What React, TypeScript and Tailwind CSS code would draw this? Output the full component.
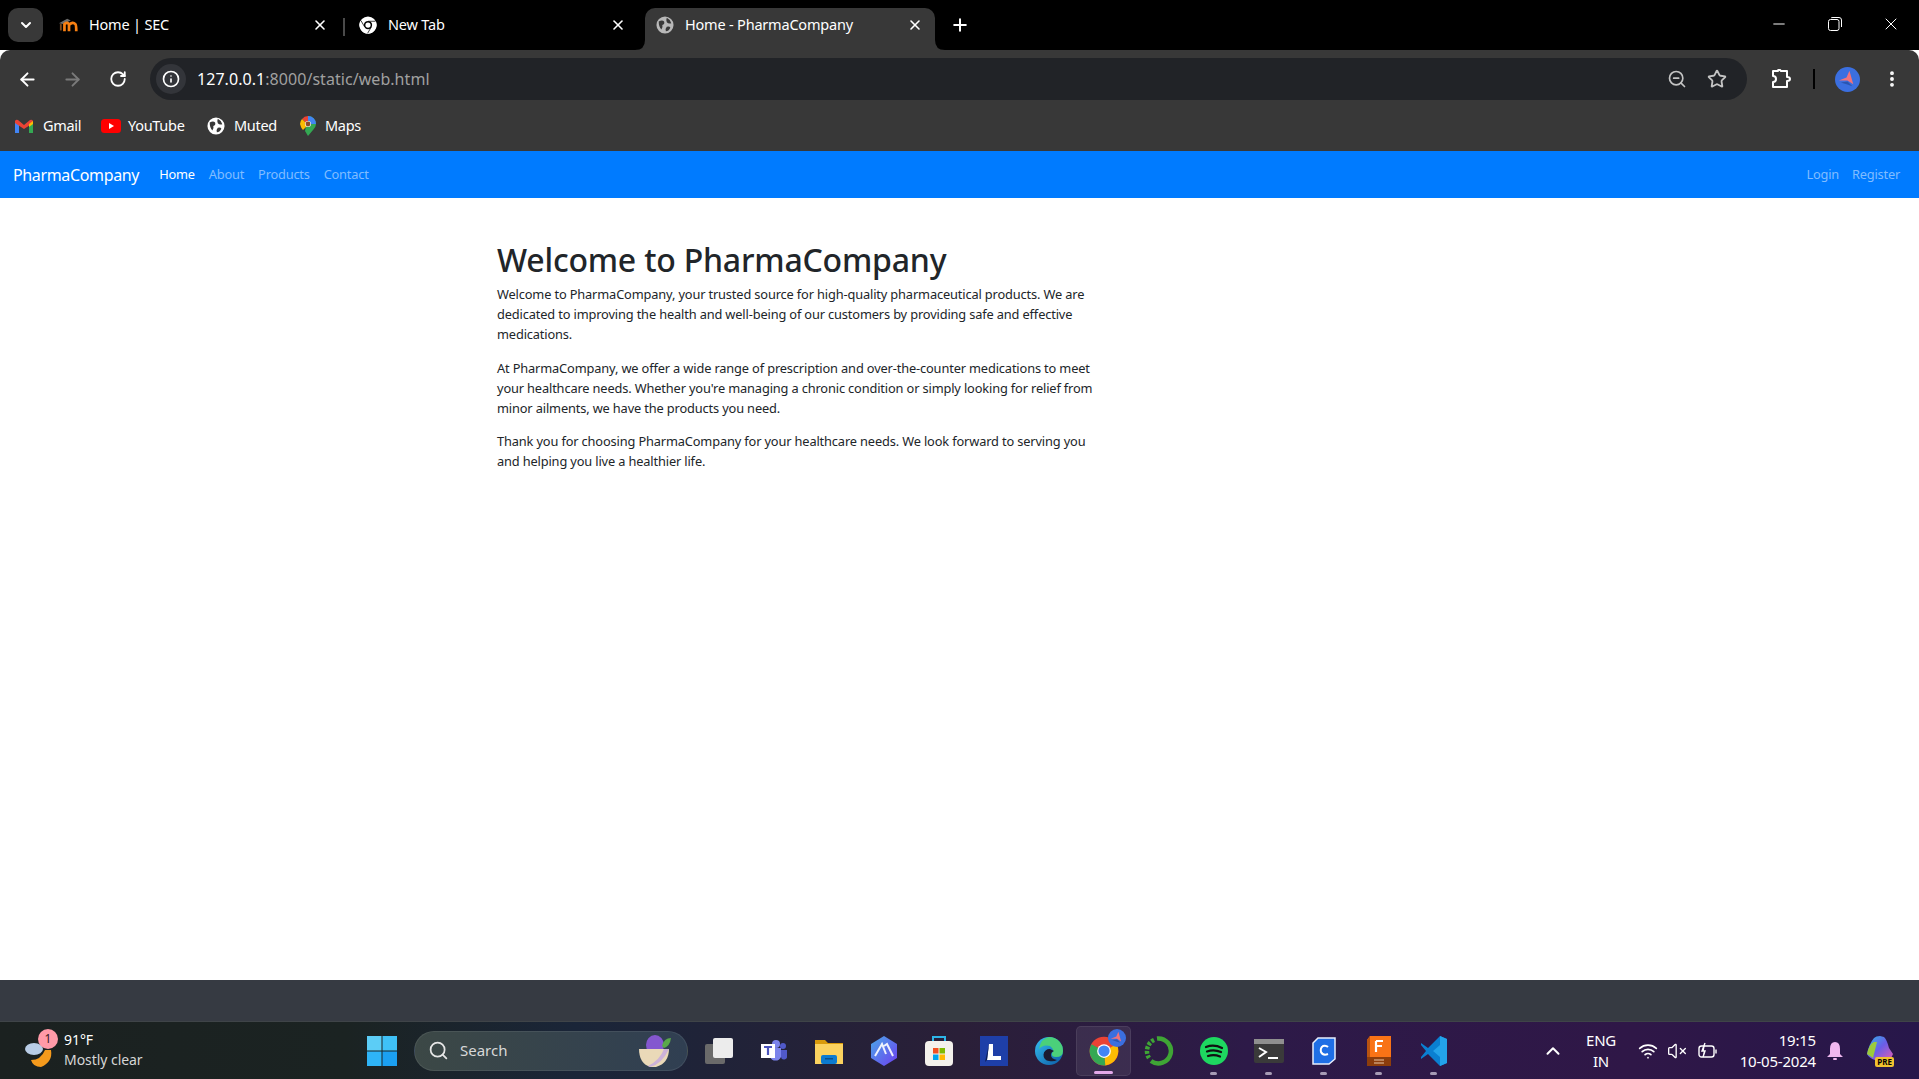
import {
  ArrowLeft,
  ArrowRight,
  ChevronDown,
  ChevronUp,
  Info,
  Minus,
  MoreVertical,
  Plus,
  RotateCw,
  Search,
  Star,
  VolumeX,
  Wifi,
  X,
  ZoomOut,
} from "lucide-react";

const SANS = "font-['Noto_Sans','Open_Sans',sans-serif]";

const ChromeMark = ({ size = 18, mono = false }: { size?: number; mono?: boolean }) => (
  <svg width={size} height={size} viewBox="0 0 48 48">
    <circle cx="24" cy="24" r="23" fill={mono ? "#fff" : "#ea4335"} />
    <path d="M24 24 L44 13 A23 23 0 0 1 26 47 Z" fill={mono ? "#fff" : "#fbbc04"} />
    <path d="M24 24 L26 47 A23 23 0 0 1 4 13 Z" fill={mono ? "#fff" : "#34a853"} />
    {mono && <path d="M24 14 L44 14 M33 29 L23 46 M15 29 L5 12" stroke="#000" strokeWidth="2" />}
    <circle cx="24" cy="24" r="11" fill={mono ? "#000" : "#fff"} />
    <circle cx="24" cy="24" r={mono ? 7 : 9} fill={mono ? "#fff" : "#4285f4"} />
  </svg>
);

const GlobeMark = ({ size = 18, color = "#fff", bg = "#383838" }: { size?: number; color?: string; bg?: string }) => (
  <svg width={size} height={size} viewBox="0 0 20 20">
    <circle cx="10" cy="10" r="9.5" fill={color} />
    <path d="M3 6 Q7 4 9 6 Q10 9 7 10 Q8 13 6 15 Q3 12 3 6Z" fill={bg} />
    <path d="M12 2 Q16 4 17 8 Q14 9 12 7 Q11 4 12 2Z M12 12 Q15 11 16 13 Q14 17 11 17 Q10 14 12 12Z" fill={bg} />
  </svg>
);

const MoodleMark = () => (
  <svg width="22" height="16" viewBox="0 0 22 16">
    <path d="M0 6 L9 1 L13 3 L4 7Z" fill="#6b6b6b" />
    <path d="M2 7 V14" stroke="#7a4a20" strokeWidth="2" />
    <path d="M6 15 V7 Q10 4 11 8 V15 M11 8 Q15 4 18 7 Q19 8 19 15" fill="none" stroke="#f98012" strokeWidth="3" />
  </svg>
);

const Tab = ({
  icon,
  title,
  width,
  pad,
  closeGap = "mr-[12px]",
  active,
}: {
  icon: React.ReactNode;
  title: string;
  width: string;
  pad: string;
  closeGap?: string;
  active?: boolean;
}) => (
  <div
    className={`relative flex h-[42px] items-center pb-[8px] ${width} ${pad} ${
      active ? "rounded-t-[10px] bg-[#383838]" : ""
    }`}
  >
    {active && (
      <>
        <svg width="10" height="10" viewBox="0 0 10 10" className="absolute bottom-0 -left-[10px]">
          <path d="M10 0 V10 H0 Q10 10 10 0Z" fill="#383838" />
        </svg>
        <svg width="10" height="10" viewBox="0 0 10 10" className="absolute -right-[10px] bottom-0">
          <path d="M0 0 V10 H10 Q0 10 0 0Z" fill="#383838" />
        </svg>
      </>
    )}
    <span className="flex w-[20px] shrink-0 items-center justify-center">{icon}</span>
    <span className="ml-[10px] flex-1 text-[14.5px] tracking-[-0.2px] text-white">{title}</span>
    <X size={16} strokeWidth={2.4} className={`${closeGap} text-white`} />
  </div>
);

const GmailMark = () => (
  <svg width="18" height="14" viewBox="0 0 18 14">
    <path d="M0 2 V14 H4 V5Z" fill="#4285f4" />
    <path d="M18 2 V14 H14 V5Z" fill="#34a853" />
    <path d="M0 2 Q1 0 3 1 L9 6 L15 1 Q17 0 18 2 L18 4 L9 10 L0 4Z" fill="#ea4335" />
    <path d="M14 5 L18 2 V5 L14 8Z" fill="#fbbc04" />
  </svg>
);

const YouTubeMark = () => (
  <svg width="20" height="14" viewBox="0 0 20 14">
    <rect width="20" height="14" rx="3.5" fill="#f00" />
    <path d="M8 4 L13 7 L8 10Z" fill="#fff" />
  </svg>
);

const MapsMark = () => (
  <svg width="16" height="20" viewBox="0 0 16 20">
    <path d="M8 0 A8 8 0 0 1 16 8 Q16 11 13 14 L8 20 L5 15Z" fill="#34a853" />
    <path d="M8 0 A8 8 0 0 1 16 8 L10 8 A2 2 0 0 0 8 5Z" fill="#4285f4" />
    <path d="M8 0 A8 8 0 0 0 2 3 L6 7 Q7 5 8 5Z" fill="#ea4335" />
    <path d="M2 3 A8 8 0 0 0 0 8 Q1 12 3 14 L7 10 L6 7Z" fill="#fbbc04" />
    <circle cx="8" cy="8" r="3" fill="#fff" opacity="0.9" />
    <circle cx="8" cy="8" r="2.4" fill="#8a4b2a" />
  </svg>
);

const Bookmark = ({ icon, label, className }: { icon: React.ReactNode; label: string; className: string }) => (
  <div className={`flex items-center ${className}`}>
    {icon}
    <span className="text-[14.5px] tracking-[-0.3px] text-white">{label}</span>
  </div>
);

const Avatar = ({ size }: { size: number }) => (
  <svg width={size} height={size} viewBox="0 0 26 26">
    <circle cx="13" cy="13" r="13" fill="#3b6fe0" />
    <path d="M15 4 L19 18 L13 14 L4 14 L12 11Z" fill="#f2727a" />
    <path d="M6 16 L13 15 L18 20 L12 18Z" fill="#2a55b0" />
  </svg>
);

// taskbar drawings
const FolderIcon = () => (
  <svg width="28" height="26" viewBox="0 0 28 26">
    <path d="M0 2 H10 L13 5 H28 V25 H0Z" fill="#d99a0b" />
    <path d="M0 6 H28 V26 H0Z" fill="#fbd25f" />
    <rect x="6" y="17" width="16" height="9" rx="2" fill="#0c7bd1" />
    <rect x="10" y="20" width="8" height="1.5" fill="#0a4f8a" />
  </svg>
);

const TeamsIcon = () => (
  <svg width="26" height="24" viewBox="0 0 26 24">
    <circle cx="15" cy="5" r="4" fill="#7b83eb" />
    <circle cx="22" cy="7" r="3" fill="#5059c9" />
    <path d="M9 9 H20 V18 A6 6 0 0 1 9 18Z" fill="#7b83eb" />
    <path d="M20 11 H26 V17 A3 3 0 0 1 20 18Z" fill="#5059c9" />
    <rect x="0" y="5" width="14" height="14" fill="#fff" />
    <path d="M3 8 H11 M7 8 V16" stroke="#4b53bc" strokeWidth="2.2" />
  </svg>
);

const ArcIcon = () => (
  <svg width="26" height="30" viewBox="0 0 26 30">
    <defs>
      <linearGradient id="arcg" x1="0" y1="0" x2="1" y2="1">
        <stop offset="0" stopColor="#4aa8e8" />
        <stop offset="1" stopColor="#6d3ff0" />
      </linearGradient>
    </defs>
    <path d="M13 0 L26 8 V22 L13 30 L0 22 V8Z" fill="url(#arcg)" />
    <path d="M4 20 L11 8 L15 18 M13 10 L16 8 L22 20" fill="none" stroke="#fff" strokeWidth="2" opacity="0.9" />
  </svg>
);

const StoreIcon = () => (
  <svg width="28" height="30" viewBox="0 0 28 30">
    <path d="M8 6 V1 H20 V6" fill="none" stroke="#2db5e8" strokeWidth="2" />
    <rect y="5" width="28" height="25" rx="4" fill="#f4f1ec" />
    <rect x="8" y="12" width="5.5" height="5.5" fill="#f25022" />
    <rect x="14.5" y="12" width="5.5" height="5.5" fill="#7fba00" />
    <rect x="8" y="18.5" width="5.5" height="5.5" fill="#00a4ef" />
    <rect x="14.5" y="18.5" width="5.5" height="5.5" fill="#ffb900" />
  </svg>
);

const LIcon = () => (
  <svg width="28" height="30" viewBox="0 0 28 30">
    <rect width="28" height="30" fill="#1e3fa8" />
    <path d="M9 8 H13 V20 H21 V24 H7Z" fill="#fff" />
    <path d="M9 8 L7 24 L5 26 Z" fill="#0d1f55" />
  </svg>
);

const EdgeIcon = () => (
  <svg width="28" height="30" viewBox="0 0 28 28">
    <defs>
      <linearGradient id="edgeg" x1="0" y1="0" x2="1" y2="1">
        <stop offset="0" stopColor="#35c1f1" />
        <stop offset="1" stopColor="#0c59a4" />
      </linearGradient>
    </defs>
    <circle cx="14" cy="14" r="14" fill="url(#edgeg)" />
    <path d="M14 0 A14 14 0 0 1 28 14 Q28 20 21 20 Q16 20 17 16 Q20 13 15 9 Q8 7 4 12 Q6 1 14 0Z" fill="#4bd07a" />
    <path d="M15 12 A6 6 0 0 0 14 24 Q19 25 22 23 Q16 22 16 18 Q16 15 19 14Z" fill="#1b1b30" />
  </svg>
);

const RingIcon = () => (
  <svg width="30" height="30" viewBox="0 0 30 30">
    <path d="M13 2.5 A12.5 12.5 0 1 1 7 25" fill="none" stroke="#3fa535" strokeWidth="4.5" />
    <path d="M5 22 A12.5 12.5 0 0 1 11 3.5" fill="none" stroke="#3fa535" strokeWidth="4.5" strokeDasharray="3 1.5" />
  </svg>
);

const SpotifyIcon = () => (
  <svg width="28" height="28" viewBox="0 0 28 28">
    <circle cx="14" cy="14" r="14" fill="#1ed760" />
    <path d="M6 10 Q14 7 22 11 M7 14.5 Q14 12 21 15 M8 19 Q14 17 20 19.5" fill="none" stroke="#111" strokeWidth="2.2" strokeLinecap="round" />
  </svg>
);

const TerminalIcon = () => (
  <svg width="30" height="24" viewBox="0 0 30 24">
    <rect width="30" height="24" rx="2" fill="#3a3a3a" />
    <rect width="30" height="5" fill="#8f8f8f" />
    <path d="M5 9 L12 13 L5 18" fill="none" stroke="#fff" strokeWidth="2" />
    <path d="M14 19 H24" stroke="#fff" strokeWidth="2" />
  </svg>
);

const CIcon = () => (
  <svg width="24" height="28" viewBox="0 0 24 28">
    <path d="M6 1 H23 V22 L17 27 H1 V6Z" fill="#1f6fe5" stroke="#e8eefb" strokeWidth="1.5" />
    <path d="M16 10 Q14 8 11 9 Q8 11 9 15 Q11 19 16 17" fill="none" stroke="#fff" strokeWidth="2" />
  </svg>
);

const FusionIcon = () => (
  <svg width="24" height="30" viewBox="0 0 24 30">
    <path d="M3 0 H24 V21 H0 V4Z" fill="#f97316" />
    <path d="M0 4 V21 L3 22 V0Z" fill="#b85310" />
    <rect y="21" width="24" height="9" fill="#8c3d0c" />
    <path d="M9 5 H16 M9 5 V16 M9 10 H15" stroke="#fff" strokeWidth="2.2" fill="none" />
    <path d="M7 24 H17 M7 27 H17" stroke="#e9c9a6" strokeWidth="1" />
  </svg>
);

const VsCodeIcon = () => (
  <svg width="26" height="30" viewBox="0 0 26 30">
    <path d="M19 0 L26 3 V27 L19 30 L7 18 L0 23 V21 L5 15 L0 9 V7 L7 12Z" fill="#0a7fd1" />
    <path d="M19 0 L26 3 V27 L19 30 V21 L12 15 L19 9Z" fill="#23a3ea" />
  </svg>
);

const CopilotIcon = () => (
  <div className="relative flex h-[30px] w-[28px] items-start justify-center">
    <svg width="26" height="24" viewBox="0 0 26 24">
      <defs>
        <linearGradient id="copg" x1="0" y1="0" x2="1" y2="1">
          <stop offset="0" stopColor="#2fb5e8" />
          <stop offset="0.5" stopColor="#6a5de8" />
          <stop offset="1" stopColor="#e05fb0" />
        </linearGradient>
      </defs>
      <path d="M7 2 Q9 0 13 0 L17 1 Q20 4 22 12 L26 18 Q24 24 18 24 H8 Q2 22 0 18 Q2 8 7 2Z" fill="url(#copg)" />
      <path d="M0 18 Q2 8 7 6 L10 6 L6 22Z" fill="#9ccb3b" />
    </svg>
    <span className="absolute -bottom-[1px] right-0 rounded-[2px] bg-[#f2c230] px-[2px] text-[8px] leading-[10px] font-bold text-black">
      PRE
    </span>
  </div>
);

const BowlIcon = () => (
  <svg width="38" height="34" viewBox="0 0 38 34">
    <ellipse cx="19" cy="11" rx="9" ry="10" fill="#8457cf" />
    <path d="M26 12 Q28 4 35 4 Q34 12 28 14Z" fill="#5aa84a" />
    <path d="M3 15 H33 Q33 29 20 33 H14 Q3 29 3 15Z" fill="#ead9b8" />
    <path d="M14 33 Q26 30 33 15 H28 Q24 26 12 32Z" fill="#c4a8e0" opacity="0.8" />
  </svg>
);

const TaskIcon = ({
  children,
  mark,
  active,
}: {
  children: React.ReactNode;
  mark?: boolean;
  active?: boolean;
}) => (
  <div
    className={`relative flex h-[50px] w-[55px] shrink-0 items-center justify-center ${
      active ? "rounded-[5px] border border-[#ffffff14] bg-[#ffffff14]" : ""
    }`}
  >
    {children}
    {mark && (
      <span
        className={`absolute bottom-[1px] h-[3px] rounded-full ${active ? "w-[19px] bg-[#e3a8ea]" : "w-[7px] bg-[#a79bb5]"}`}
      />
    )}
  </div>
);

export default function App() {
  return (
    <div className={`flex h-[1079px] w-[1919px] flex-col overflow-hidden bg-white ${SANS}`}>
      {/* tab strip */}
      <div className="flex h-[50px] shrink-0 items-end bg-black">
        <div className="mb-[8px] ml-[8px] flex h-[34px] w-[35px] items-center justify-center rounded-[10px] bg-[#383838]">
          <ChevronDown size={16} strokeWidth={3} className="text-white" />
        </div>
        <div className="ml-[7px] flex items-end">
          <Tab icon={<MoodleMark />} title="Home | SEC" width="w-[293px]" pad="pl-[9px]" closeGap="mr-[15px]" />
          <div className="mb-[14px] h-[18px] w-[2px] bg-[#4a4a4a]" />
          <Tab icon={<ChromeMark mono />} title="New Tab" width="w-[300px]" pad="pl-[13px]" closeGap="mr-[19px]" />
          <Tab
            active
            icon={<GlobeMark color="#b8b8b8" />}
            title="Home - PharmaCompany"
            width="w-[290px]"
            pad="pl-[10px]"
          />
        </div>
        <div className="mb-[8px] ml-[12px] flex h-[34px] w-[26px] items-center justify-center">
          <Plus size={20} strokeWidth={2.4} className="text-white" />
        </div>
        <div className="ml-auto flex h-[50px] items-start pt-[7px] text-white">
          <div className="flex h-[34px] w-[56px] items-center justify-center">
            <Minus size={18} strokeWidth={1.3} />
          </div>
          <div className="flex h-[34px] w-[56px] items-center justify-center">
            <svg width="14" height="14" viewBox="0 0 14 14" fill="none" stroke="#fff" strokeWidth="1">
              <rect x="0.5" y="2.5" width="10.5" height="11" rx="2" />
              <path d="M3 1 Q3 0.5 5 0.5 H11 Q13.5 0.5 13.5 3 V10" />
            </svg>
          </div>
          <div className="flex h-[34px] w-[56px] items-center justify-center">
            <X size={20} strokeWidth={1.2} />
          </div>
        </div>
      </div>

      {/* toolbar */}
      <div className="flex h-[50px] shrink-0 items-center rounded-t-[10px] bg-[#383838] pt-[8px] pl-[5px]">
        <div className="flex w-[45px] justify-center text-white">
          <ArrowLeft size={21} strokeWidth={2.2} />
        </div>
        <div className="flex w-[45px] justify-center text-[#7a7a7a]">
          <ArrowRight size={21} strokeWidth={2.2} />
        </div>
        <div className="flex w-[45px] justify-center text-white">
          <RotateCw size={18} strokeWidth={2.4} />
        </div>
        <div className="ml-[10px] flex h-[42px] flex-1 items-center rounded-full bg-[#212327] pl-[6px]">
          <div className="flex h-[30px] w-[30px] items-center justify-center rounded-full bg-[#33353a]">
            <Info size={18} strokeWidth={2.2} className="text-white" />
          </div>
          <div className="ml-[11px] flex-1 text-[16px] tracking-[0.05px] text-[#a0a0a0]">
            <span className="text-white">127.0.0.1</span>:8000/static/web.html
          </div>
          <ZoomOut size={20} strokeWidth={2} className="text-[#c4c4c4]" />
          <Star size={20} strokeWidth={2.2} className="mr-[20px] ml-[20px] text-[#c4c4c4]" />
        </div>
        <div className="flex w-[172px] items-center text-white">
          <svg width="20" height="20" viewBox="0 0 20 20" className="ml-[24px]" fill="none" stroke="#fff" strokeWidth="2">
            <path d="M2 2 H7 Q7 0 9 1 Q10 2 10 2 H16 V8 Q19 8 19 10 Q19 12 16 12 V18 H2 V13 Q5 13 5 10 Q5 7 2 7Z" strokeLinejoin="round" />
          </svg>
          <div className="ml-[22px] h-[20px] w-[2px] bg-black" />
          <div className="ml-[20px]">
            <Avatar size={25} />
          </div>
          <MoreVertical size={20} strokeWidth={2.6} className="ml-[22px]" />
        </div>
      </div>

      {/* bookmarks */}
      <div className="flex h-[51px] shrink-0 items-center bg-[#383838] pl-[15px]">
        <Bookmark icon={<GmailMark />} label="Gmail" className="w-[86px] gap-[10px]" />
        <Bookmark icon={<YouTubeMark />} label="YouTube" className="w-[106px] gap-[7px]" />
        <Bookmark icon={<GlobeMark />} label="Muted" className="w-[93px] gap-[9px]" />
        <Bookmark icon={<MapsMark />} label="Maps" className="gap-[9px]" />
      </div>

      {/* site navbar */}
      <nav className="flex h-[47px] shrink-0 items-center bg-[#007bff] pr-[19px] pl-[13px] text-[12.8px] text-[#80bdff]">
        <span className="mr-[20px] text-[16px] tracking-[-0.35px] text-white">PharmaCompany</span>
        <div className="flex gap-[14px] tracking-[-0.2px]">
          <span className="text-white">Home</span>
          <span>About</span>
          <span>Products</span>
          <span>Contact</span>
        </div>
        <div className="ml-auto flex gap-[13px] tracking-[-0.2px]">
          <span>Login</span>
          <span>Register</span>
        </div>
      </nav>

      {/* page */}
      <main className="flex-1 bg-white pt-[43px] pl-[497px] text-[#212529]">
        <div className="w-[600px]">
          <h1 className="mb-[5px] text-[32px] leading-[38px] font-medium tracking-[-0.2px]">Welcome to PharmaCompany</h1>
          <div className="text-[12.8px] leading-[20px] tracking-[-0.14px]">
            <p className="mb-[13.5px]">
              Welcome to PharmaCompany, your trusted source for high-quality pharmaceutical products. We are dedicated
              to improving the health and well-being of our customers by providing safe and effective medications.
            </p>
            <p className="mb-[13.5px]">
              At PharmaCompany, we offer a wide range of prescription and over-the-counter medications to meet your
              healthcare needs. Whether you're managing a chronic condition or simply looking for relief from minor
              ailments, we have the products you need.
            </p>
            <p>
              Thank you for choosing PharmaCompany for your healthcare needs. We look forward to serving you and helping
              you live a healthier life.
            </p>
          </div>
        </div>
      </main>

      {/* strip under the page */}
      <div className="h-[41px] shrink-0 bg-[#363a42]" />

      {/* taskbar */}
      <footer className="flex h-[58px] shrink-0 items-center border-t border-[#3f4448] bg-[linear-gradient(90deg,#1b2120_0%,#1b2322_18%,#1a2538_30%,#2a1f38_50%,#2d1a48_65%,#2f1747_85%,#27174a_100%)] text-white">
        <div className="flex w-[367px] shrink-0 items-center pl-[25px]">
          <div className="relative h-[34px] w-[30px]">
            <svg width="30" height="34" viewBox="0 0 30 34">
              <path d="M6 26 Q16 26 20 16 L26 16 Q28 28 16 33 Q8 33 6 26Z" fill="#f59a1c" />
              <ellipse cx="9" cy="15" rx="9" ry="6" fill="#b9cde6" />
            </svg>
            <span className="absolute -top-[5px] left-[13px] flex h-[20px] w-[20px] items-center justify-center rounded-full bg-[#ff9aa8] text-[12px] text-[#3a1a20]">
              1
            </span>
          </div>
          <div className="mb-[2px] ml-[9px] text-[14px] leading-[20px] tracking-[-0.05px]">
            <div>91°F</div>
            <div className="text-[#d6d6d6]">Mostly clear</div>
          </div>
        </div>
        <svg width="30" height="30" viewBox="0 0 30 30" className="shrink-0">
          <rect width="14.5" height="14.5" fill="#5ccdf6" />
          <rect x="15.5" width="14.5" height="14.5" fill="#3fc1f7" />
          <rect y="15.5" width="14.5" height="14.5" fill="#2eb4f7" />
          <rect x="15.5" y="15.5" width="14.5" height="14.5" fill="#1ba0f2" />
        </svg>
        <div className="ml-[17px] flex h-[40px] w-[274px] shrink-0 items-center rounded-full border border-[#ffffff14] bg-[linear-gradient(90deg,#3c4846,#303f52)] pr-[13px] pl-[13px]">
          <Search size={21} strokeWidth={2} className="text-[#e6e6e6]" />
          <span className="ml-[11px] flex-1 text-[15px] text-[#d8d8d8]">Search</span>
          <BowlIcon />
        </div>
        <div className="ml-[3px] flex shrink-0 items-center">
          <TaskIcon>
            <div className="relative h-[26px] w-[28px]">
              <div className="absolute bottom-0 left-0 h-[20px] w-[20px] rounded-[2px] bg-[#6a6a6a]" />
              <div className="absolute top-0 right-0 h-[20px] w-[20px] rounded-[2px] bg-[#ececec]" />
            </div>
          </TaskIcon>
          <TaskIcon>
            <TeamsIcon />
          </TaskIcon>
          <TaskIcon>
            <FolderIcon />
          </TaskIcon>
          <TaskIcon>
            <ArcIcon />
          </TaskIcon>
          <TaskIcon>
            <StoreIcon />
          </TaskIcon>
          <TaskIcon>
            <LIcon />
          </TaskIcon>
          <TaskIcon>
            <EdgeIcon />
          </TaskIcon>
          <TaskIcon active mark>
            <div className="relative">
              <ChromeMark size={30} />
              <span className="absolute -top-[7px] -right-[7px]">
                <Avatar size={18} />
              </span>
            </div>
          </TaskIcon>
          <TaskIcon>
            <RingIcon />
          </TaskIcon>
          <TaskIcon mark>
            <SpotifyIcon />
          </TaskIcon>
          <TaskIcon mark>
            <TerminalIcon />
          </TaskIcon>
          <TaskIcon mark>
            <CIcon />
          </TaskIcon>
          <TaskIcon mark>
            <FusionIcon />
          </TaskIcon>
          <TaskIcon mark>
            <VsCodeIcon />
          </TaskIcon>
        </div>
        <ChevronUp size={22} strokeWidth={2.2} className="ml-[81px] shrink-0" />
        <div className="ml-[17px] w-[40px] shrink-0 text-center text-[15px] leading-[21px] tracking-[-0.3px]">
          ENG
          <br />
          IN
        </div>
        <Wifi size={20} strokeWidth={2} className="ml-[17px] shrink-0" />
        <VolumeX size={20} strokeWidth={1.6} className="ml-[9px] shrink-0" />
        <svg width="20" height="20" viewBox="0 0 20 20" className="ml-[11px] shrink-0" fill="none" stroke="#fff" strokeWidth="1.4">
          <rect x="1" y="5" width="15" height="11" rx="2.5" />
          <path d="M18 8.5 V12.5" />
          <path d="M7 2 L4 10 H7 L5 16" fill="#fff" />
        </svg>
        <div className="ml-[14px] w-[84px] shrink-0 whitespace-nowrap text-right text-[15px] leading-[21px] tracking-[-0.2px]">
          19:15
          <br />
          10-05-2024
        </div>
        <svg width="16" height="20" viewBox="0 0 16 20" className="ml-[11px] shrink-0">
          <path d="M8 1 Q13 1 13 8 V13 L16 16 H0 L3 13 V8 Q3 1 8 1Z" fill="#f0b8f0" />
          <rect x="6" y="17" width="4" height="2" rx="1" fill="#f0b8f0" />
        </svg>
        <div className="ml-[23px] shrink-0">
          <CopilotIcon />
        </div>
      </footer>
    </div>
  );
}
